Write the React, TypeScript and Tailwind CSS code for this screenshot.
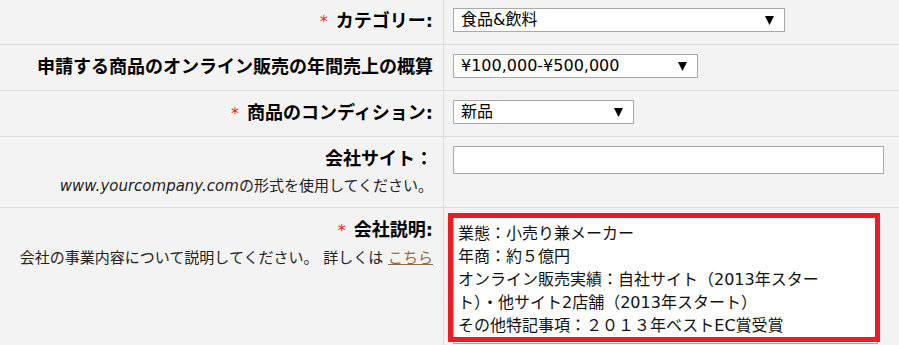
import React from 'react';

const FONT = "font-['DejaVu_Sans','Noto_Sans_CJK_JP',sans-serif]";

interface SelectBoxProps {
    value: string;
    width: string;
}

const Arrow: React.FC = () => (
    <svg width="9" height="10" viewBox="0 0 9 10" className="shrink-0">
        <path d="M0 1 H9 L4.5 10 Z" fill="#000" />
    </svg>
);

const SelectBox: React.FC<SelectBoxProps> = ({ value, width }) => (
    <div
        className={`${width} h-[24px] bg-white border border-[#a9a9a9] flex items-center justify-between pl-[7px] pr-[10px] text-[16px] leading-[22px] text-black`}
    >
        <span className="whitespace-nowrap">{value}</span>
        <Arrow />
    </div>
);

const Required: React.FC = () => (
    <span className="text-[#ff1a1a] font-normal text-[16px] mr-[8px]">*</span>
);

interface RowProps {
    label: React.ReactNode;
    note?: React.ReactNode;
    height: string;
    children: React.ReactNode;
}

const Row: React.FC<RowProps> = ({ label, note, height, children }) => (
    <div className={`flex ${height} border-b border-[#dcdcdc]`}>
        <div className="w-[444px] shrink-0 border-r border-[#dcdcdc] pr-[10px] pt-[9px] text-right">
            <div className="text-[18px] leading-[26px] font-bold text-black whitespace-nowrap">
                {label}
            </div>
            {note && (
                <div className="text-[15px] leading-[28px] text-[#222] whitespace-nowrap">
                    {note}
                </div>
            )}
        </div>
        <div className="flex-1 pl-[9px] pt-[9px]">{children}</div>
    </div>
);

const descLines = [
    '業態：小売り兼メーカー',
    '年商：約５億円',
    'オンライン販売実績：自社サイト（2013年スター',
    'ト）・他サイト2店舗（2013年スタート）',
    'その他特記事項：２０１３年ベストEC賞受賞',
];

export default function App() {
    return (
        <div className={`${FONT} w-[899px] h-[345px] overflow-hidden bg-[#f3f3f3]`}>
            <div className="-mt-px">
                <Row height="h-[46px]" label={<><Required />カテゴリー:</>}>
                    <SelectBox value="食品&飲料" width="w-[332px]" />
                </Row>
                <Row height="h-[46px]" label="申請する商品のオンライン販売の年間売上の概算">
                    <SelectBox value="¥100,000-¥500,000" width="w-[245px]" />
                </Row>
                <Row height="h-[46px]" label={<><Required />商品のコンディション:</>}>
                    <SelectBox value="新品" width="w-[181px]" />
                </Row>
                <Row
                    height="h-[71px]"
                    label="会社サイト："
                    note={
                        <>
                            <span className="italic">www.yourcompany.com</span>
                            の形式を使用してください。
                        </>
                    }
                >
                    <div className="w-[431px] h-[28px] bg-white border border-[#a9a9a9]" />
                </Row>
                <Row
                    height="h-[140px]"
                    label={<><Required />会社説明:</>}
                    note={
                        <>
                            会社の事業内容について説明してください。 詳しくは{' '}
                            <span className="text-[#8f6a42] underline">こちら</span>
                        </>
                    }
                >
                    <div className="relative">
                        <div className="w-[425px] h-[127px] bg-white border border-[#a9a9a9] pl-[4px] pt-[4px] text-[16px] leading-[23px] text-[#111]">
                            {descLines.map((line, i) => (
                                <div key={i} className="whitespace-nowrap">
                                    {line}
                                </div>
                            ))}
                        </div>
                        {/* annotation overlay */}
                        <div className="absolute left-[-5px] top-[-4px] w-[432px] h-[129px] border-[5px] border-[#ed1c24] pointer-events-none" />
                    </div>
                </Row>
            </div>
        </div>
    );
}
